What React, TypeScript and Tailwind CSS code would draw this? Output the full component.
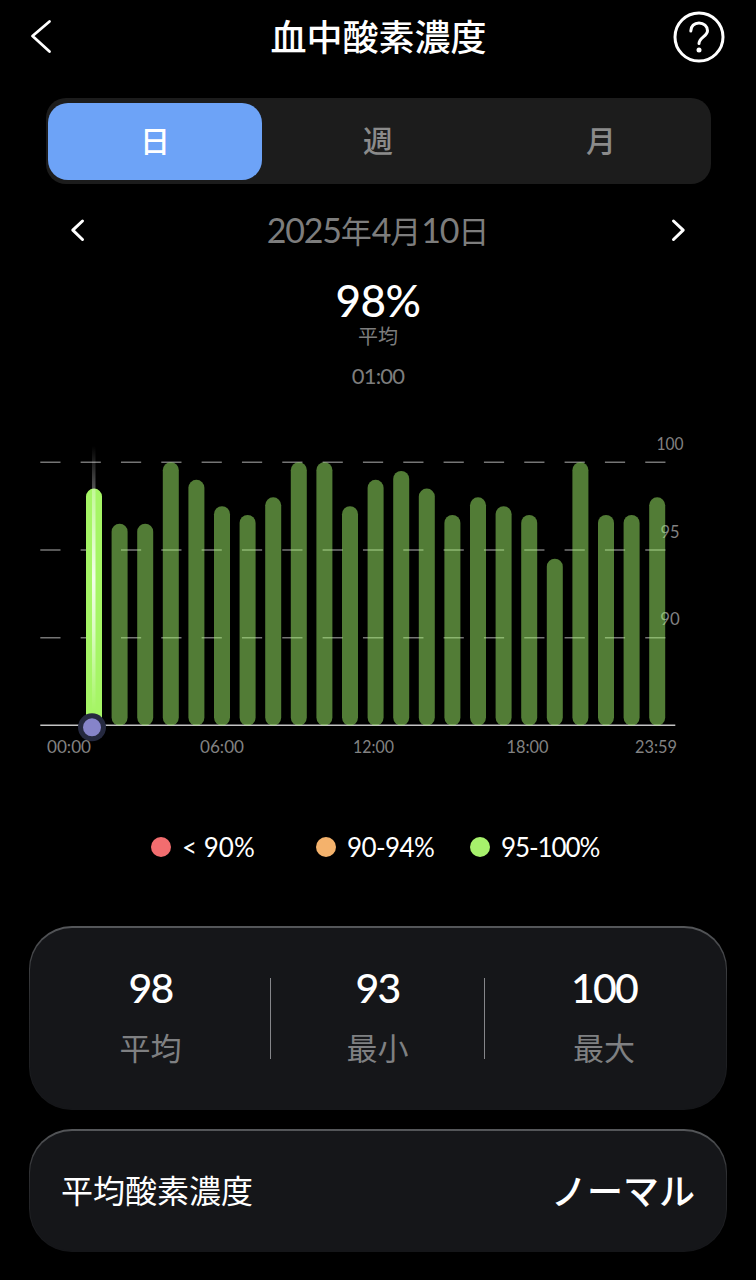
import React from 'react';
import clsx from 'clsx';

const TABS = ['日', '週', '月'];

// Hourly SpO2 averages, 01:00 to 23:00
const READINGS = [
  98.5, 96.5, 96.5, 100, 99, 97.5, 97, 98, 100, 100, 97.5, 99,
  99.5, 98.5, 97, 98, 97.5, 97, 94.5, 100, 97, 97, 98,
];

const X_LABELS = [
  { text: '00:00', x: 69, width: 44 },
  { text: '06:00', x: 222, width: 44 },
  { text: '12:00', x: 373.5, width: 41 },
  { text: '18:00', x: 527.5, width: 42 },
  { text: '23:59', x: 656, width: 42 },
];

const Y_LABELS = [
  { text: '100', x: 670, value: 100, width: 27 },
  { text: '95', x: 670, value: 95, width: 19 },
  { text: '90', x: 670, value: 90, width: 19.5 },
];

const LEGEND = [
  { label: '< 90%', dot: 'bg-[#f26d6f]', item: 'w-[165px]', tracking: '' },
  { label: '90-94%', dot: 'bg-[#f4b26c]', item: 'w-[154px]', tracking: 'tracking-[-0.6px]' },
  { label: '95-100%', dot: 'bg-[#a7f16c]', item: '', tracking: 'tracking-[-1.1px]' },
];

const BASELINE = 305.5;
const UNIT = 17.55;
const yFor = (value: number) => BASELINE - (value - 85) * UNIT;

const Chart: React.FC = () => (
  <svg width="756" height="360" viewBox="0 0 756 360" className="block">
    <defs>
      <linearGradient id="cursor" x1="0" y1="0" x2="0" y2="1">
        <stop offset="0" stopColor="#fff" stopOpacity="0" />
        <stop offset="0.15" stopColor="#fff" stopOpacity="0.3" />
        <stop offset="0.5" stopColor="#fff" stopOpacity="0.85" />
        <stop offset="0.7" stopColor="#fff" stopOpacity="0.6" />
        <stop offset="1" stopColor="#fff" stopOpacity="0" />
      </linearGradient>
    </defs>
    {[100, 95, 90].map((v) => (
      <line key={v} x1="40.3" x2="665.5" y1={yFor(v)} y2={yFor(v)} stroke="#757575" strokeWidth="1.4" strokeDasharray="20.2 20.13" />
    ))}
    <line x1="40.3" x2="675.3" y1="305.3" y2="305.3" stroke="#c4c4c4" strokeWidth="1.4" />
    {Y_LABELS.map((l) => (
      <text key={l.text} x={l.x} y={yFor(l.value) - 12.5} textAnchor="middle" textLength={l.width} lengthAdjust="spacingAndGlyphs" fontSize="17" fill="#828282">
        {l.text}
      </text>
    ))}
    {READINGS.map((v, i) => (
      <rect
        key={i}
        x={86 + i * 25.6}
        y={yFor(v)}
        width="16"
        height={BASELINE - yFor(v)}
        rx="8"
        fill={i === 0 ? '#a6f566' : '#a3f76b'}
        fillOpacity={i === 0 ? 1 : 0.5}
      />
    ))}
    <rect x="92" y="26" width="3.500" height="264" fill="url(#cursor)" />
    <circle cx="92" cy="307.3" r="14" fill="#25293f" />
    <circle cx="92" cy="307.3" r="9" fill="#8684c9" />
    {X_LABELS.map((l) => (
      <text key={l.text} x={l.x} y="333.3" textAnchor="middle" textLength={l.width} lengthAdjust="spacingAndGlyphs" fontSize="17" fill="#828282">
        {l.text}
      </text>
    ))}
  </svg>
);

interface CardProps {
  className?: string;
  children: React.ReactNode;
}

const Card: React.FC<CardProps> = ({ className, children }) => (
  <div className="rounded-[43px] bg-linear-to-b from-[#55575a] via-[#2b2c2f] via-40% to-[#151619] px-px pt-[1.5px] pb-px">
    <div className={clsx('flex items-center rounded-[42px] bg-[#151619]', className)}>{children}</div>
  </div>
);

interface StatProps {
  value: string;
  label: string;
  className: string;
}

const Stat: React.FC<StatProps> = ({ value, label, className }) => (
  <div className={clsx('flex flex-col items-center', className)}>
    <span className="text-[41px] font-medium leading-[48px] tracking-[-1.8px]">{value}</span>
    <span className="mt-3 text-[31px] leading-[48px] text-[#7f8082]">{label}</span>
  </div>
);

const DateNumber: React.FC<{ children: string }> = ({ children }) => (
  <span className="text-[34px] tracking-[-1.2px]">{children}</span>
);

export default function App() {
  return (
    <div className="flex h-[1280px] w-[756px] flex-col overflow-hidden bg-black font-['Lato','Noto_Sans_CJK_JP',sans-serif] text-white">
      <header className="flex h-[74px] items-center justify-between pl-[30px] pr-[31px]">
        <svg width="54" height="36" viewBox="0 0 54 36" fill="none" stroke="#fff" strokeWidth="2.8" strokeLinecap="round" strokeLinejoin="round">
          <path d="M19.500 2.500 2.500 17l17 15.500" />
        </svg>
        <h1 className="text-[36px] font-medium leading-none">血中酸素濃度</h1>
        <svg width="52" height="52" viewBox="0 0 52 52" fill="none" stroke="#fff" strokeWidth="3" strokeLinecap="round" strokeLinejoin="round">
          <circle cx="26" cy="26" r="24" />
          <path d="M17.800 20c0-4.800 3.500-8 8.200-8s8.500 3.200 8.500 7.700c0 5.500-8.500 7-8.500 12.800" />
          <circle cx="26" cy="39" r="2.500" fill="#fff" stroke="none" />
        </svg>
      </header>

      <nav className="mt-6 ml-[46px] flex h-[86px] w-[665px] items-center rounded-[20px] bg-[#1c1c1c] px-[2px] pt-px">
        {TABS.map((tab, i) => (
          <button
            key={tab}
            className={clsx(
              'h-[77px] rounded-[20px] pb-[3px] text-[30px] font-medium',
              i === 0 ? 'w-[214px] bg-[#6da3f7]' : 'text-[#8b8b8b]',
              i === 1 && 'w-[232px]',
              i === 2 && 'w-[214px]',
            )}
          >
            {tab}
          </button>
        ))}
      </nav>

      <div className="mt-[22px] flex h-12 items-center justify-between pl-[70px] pr-[70px]">
        <svg width="16" height="24" viewBox="0 0 16 24" fill="none" stroke="#fff" strokeWidth="3" strokeLinecap="round" strokeLinejoin="round">
          <path d="M12.500 3 2.800 12.200l9.700 9.300" />
        </svg>
        <span className="text-[31px] leading-none text-[#7d7d7d]">
          <DateNumber>2025</DateNumber>年<DateNumber>4</DateNumber>月<DateNumber>10</DateNumber>日
        </span>
        <svg width="16" height="24" viewBox="0 0 16 24" fill="none" stroke="#fff" strokeWidth="3" strokeLinecap="round" strokeLinejoin="round">
          <path d="m3.500 3 9.700 9.200-9.700 9.300" />
        </svg>
      </div>

      <div className="flex h-[166px] flex-col items-center pt-[22px]">
        <span className="text-[44px] font-medium leading-[48px] tracking-[-0.5px]">98%</span>
        <span className="text-[20px] leading-6 text-[#7d7d7d]">平均</span>
        <span className="mt-[14px] text-[22px] leading-7 tracking-[-0.8px] text-[#7d7d7d]">01:00</span>
      </div>

      <Chart />

      <div className="mt-[47px] flex h-10 items-center pl-[151px]">
        {LEGEND.map(({ label, dot, item, tracking }) => (
          <div key={label} className={clsx('flex items-center gap-[11px]', item)}>
            <span className={clsx('size-5 rounded-full', dot)} />
            <span className={clsx('text-[26px] leading-none', tracking)}>{label}</span>
          </div>
        ))}
      </div>

      <section className="mt-[59px] flex flex-col gap-[19px] px-[29px]">
        <Card className="h-[181.500px]">
          <Stat value="98" label="平均" className="w-[240px] pl-px" />
          <div className="h-[81px] w-px bg-[#85868a]" />
          <Stat value="93" label="最小" className="w-[213px]" />
          <div className="h-[81px] w-px bg-[#85868a]" />
          <Stat value="100" label="最大" className="w-[238px]" />
        </Card>
        <Card className="h-[120px] justify-between pl-[31px] pr-[31px] pt-px">
          <span className="text-[32px]">平均酸素濃度</span>
          <span className="text-[36px] font-medium">ノーマル</span>
        </Card>
      </section>
    </div>
  );
}
